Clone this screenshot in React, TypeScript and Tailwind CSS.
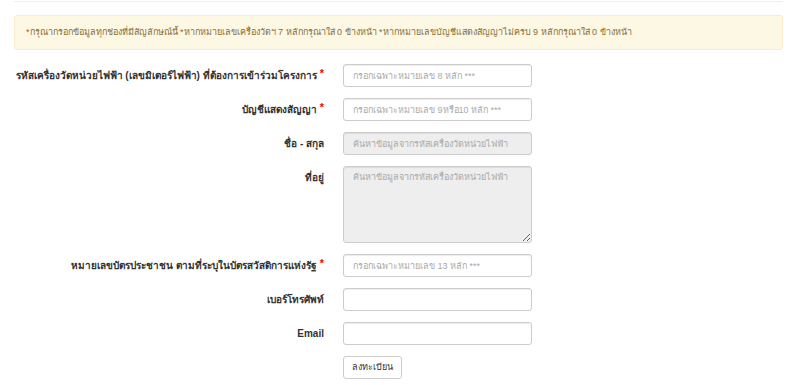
import React from 'react';

const font = { fontFamily: '"Liberation Sans", Arial, "Noto Sans", sans-serif' };

const inputCls =
  'block h-[23px] w-[189px] rounded-[3px] border border-[#cccccc] bg-white px-[9px] text-[9px] text-[#555] shadow-[inset_0_1px_1px_rgba(0,0,0,0.075)] outline-none placeholder:text-[#a9a9a9]';
const disabledCls =
  'block h-[23px] w-[189px] rounded-[3px] border border-[#cccccc] bg-[#eeeeee] px-[9px] text-[9px] text-[#555] shadow-[inset_0_1px_1px_rgba(0,0,0,0.075)] outline-none placeholder:text-[#a9a9a9]';

const Star = () => <span className="relative -top-[2px] ml-[3px] text-[11px] text-[#ff0000]">*</span>;

const Row = ({ label, required, children, top }: { label: string; required?: boolean; children: React.ReactNode; top?: boolean }) => (
  <div className={`flex ${top ? 'items-start' : 'items-center'}`}>
    <label
      className={`w-[324px] shrink-0 text-right text-[10px] leading-[14px] font-bold text-[#333] ${top ? 'pt-[5px]' : ''}`}
    >
      {label}
      {required && <Star />}
    </label>
    <div className="ml-[19px]">{children}</div>
  </div>
);

export default function App() {
  return (
    <div className="h-[385px] w-[800px] overflow-hidden bg-white" style={font}>
      <div className="px-[14px] pt-[1px]">
        <div className="w-[769px] border-t border-[#eeeeee]" />
        <div className="mt-[13px] flex h-[35px] w-[769px] items-center rounded-[3px] border border-[#faebcc] bg-[#fcf8e3] px-[11px] text-[9px] text-[#8a6d3b]">
          *กรุณากรอกข้อมูลทุกช่องที่มีสัญลักษณ์นี้ *หากหมายเลขเครื่องวัดฯ 7 หลักกรุณาใส่ 0 ข้างหน้า *หากหมายเลขบัญชีแสดงสัญญาไม่ครบ 9 หลักกรุณาใส่ 0 ข้างหน้า
        </div>
      </div>

      <form className="mt-[14px] flex flex-col gap-[11px]" onSubmit={(e) => e.preventDefault()}>
        <Row label="รหัสเครื่องวัดหน่วยไฟฟ้า (เลขมิเตอร์ไฟฟ้า) ที่ต้องการเข้าร่วมโครงการ" required>
          <input className={inputCls} placeholder="กรอกเฉพาะหมายเลข 8 หลัก ***" />
        </Row>
        <Row label="บัญชีแสดงสัญญา" required>
          <input className={inputCls} placeholder="กรอกเฉพาะหมายเลข 9หรือ10 หลัก ***" />
        </Row>
        <Row label="ชื่อ - สกุล">
          <input className={disabledCls} placeholder="ค้นหาข้อมูลจากรหัสเครื่องวัดหน่วยไฟฟ้า" disabled />
        </Row>
        <Row label="ที่อยู่" top>
          <textarea
            className="block h-[77px] w-[189px] rounded-[3px] border border-[#cccccc] bg-[#eeeeee] px-[9px] py-[4px] text-[9px] text-[#555] shadow-[inset_0_1px_1px_rgba(0,0,0,0.075)] outline-none placeholder:text-[#a9a9a9]"
            placeholder="ค้นหาข้อมูลจากรหัสเครื่องวัดหน่วยไฟฟ้า"
            disabled
          />
        </Row>
        <Row label="หมายเลขบัตรประชาชน ตามที่ระบุในบัตรสวัสดิการแห่งรัฐ" required>
          <input className={inputCls} placeholder="กรอกเฉพาะหมายเลข 13 หลัก ***" />
        </Row>
        <Row label="เบอร์โทรศัพท์">
          <input className={inputCls} />
        </Row>
        <Row label="Email">
          <input className={inputCls} />
        </Row>
        <Row label="">
          <button
            type="submit"
            className="block h-[23px] rounded-[3px] border border-[#cccccc] bg-white px-[8px] text-[9px] text-[#333]"
          >
            ลงทะเบียน
          </button>
        </Row>
      </form>
    </div>
  );
}
